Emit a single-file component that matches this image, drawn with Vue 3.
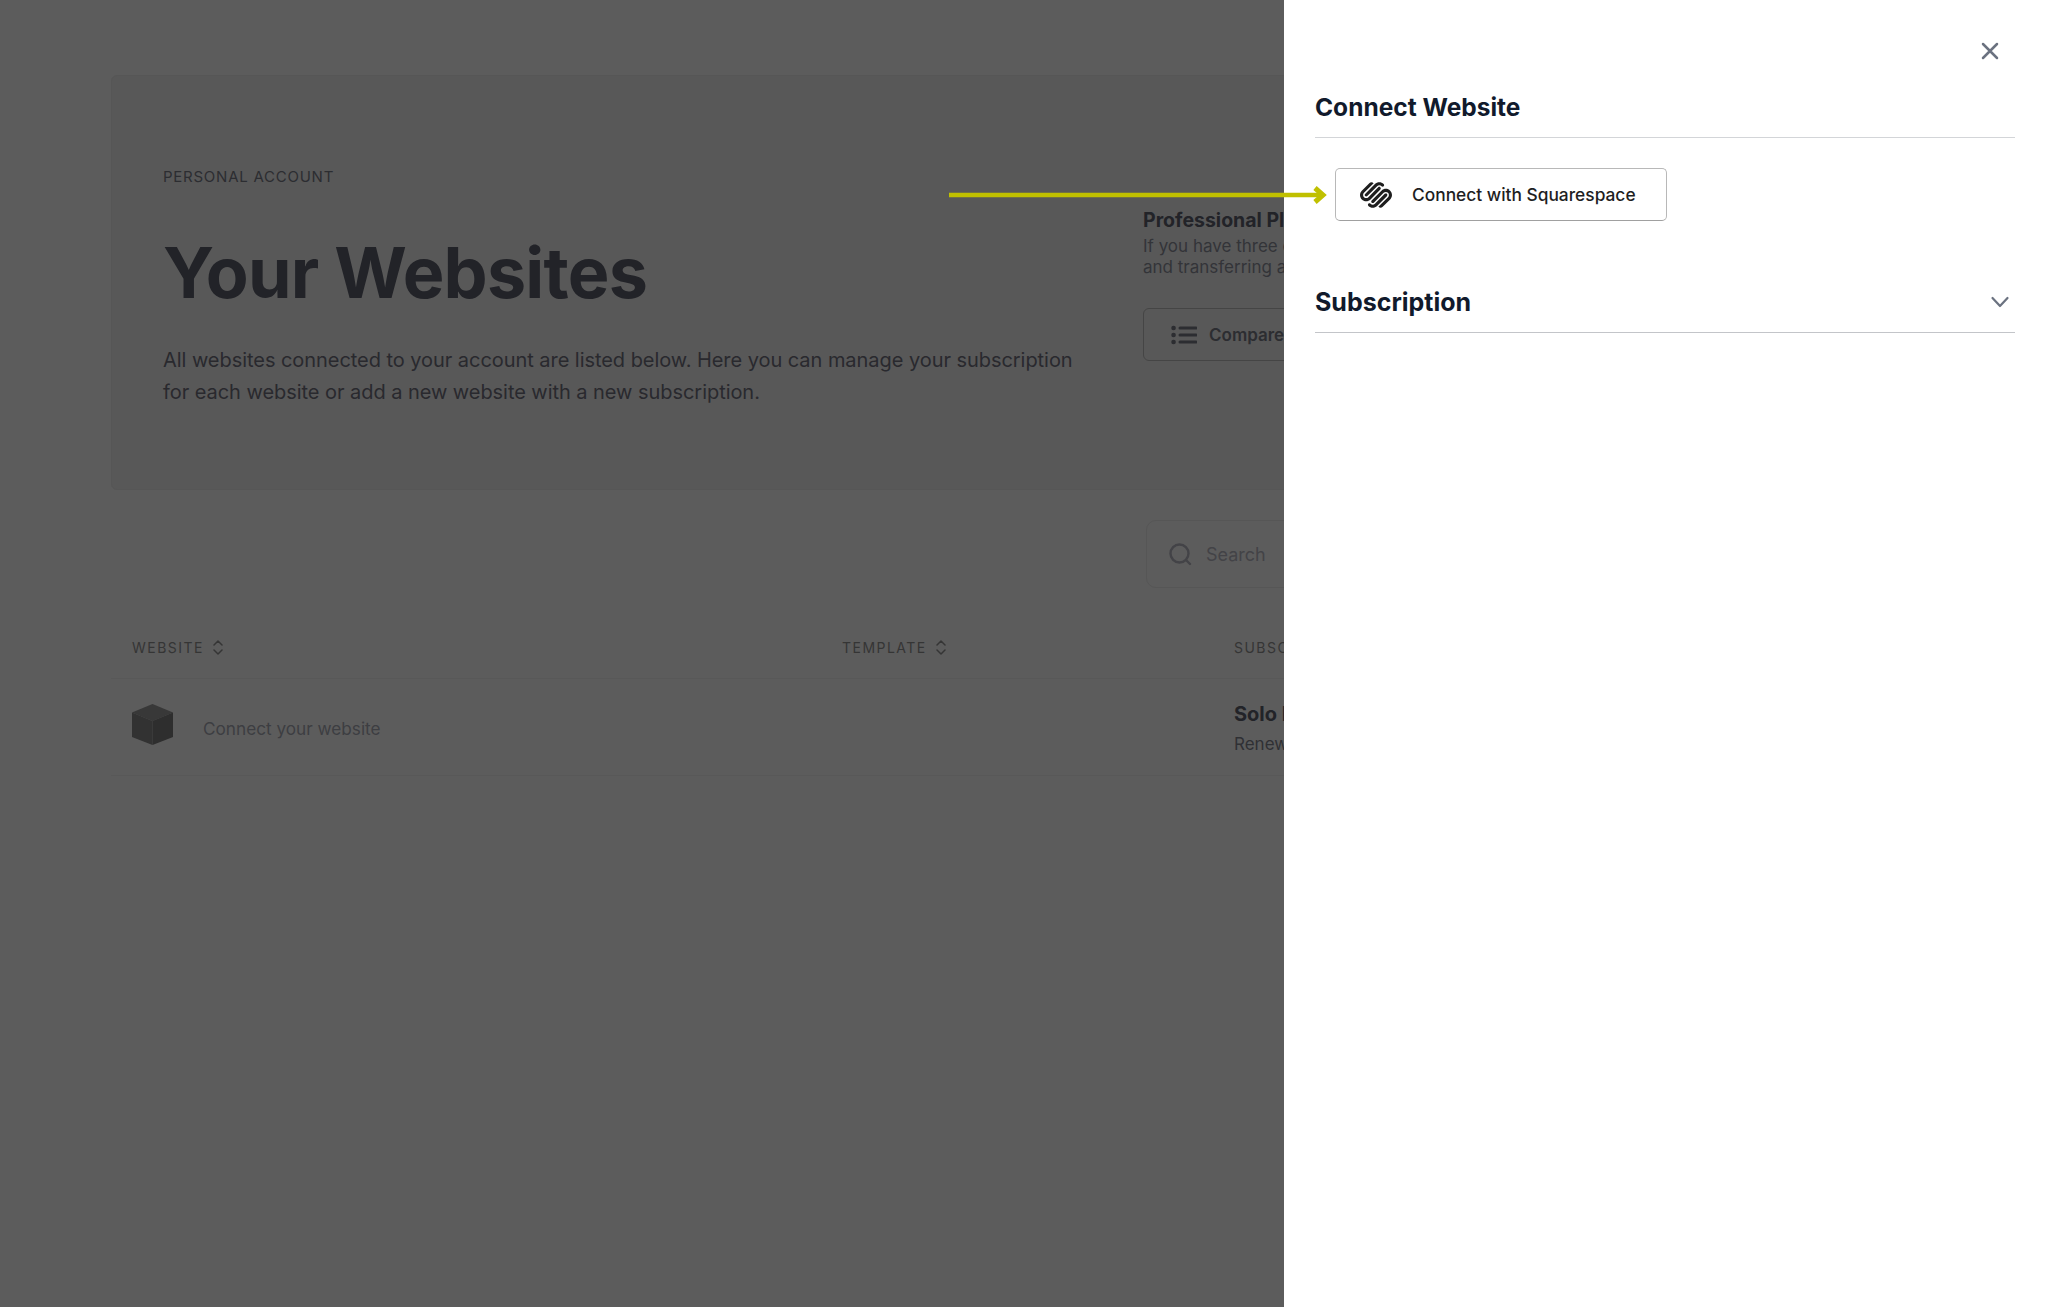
<template>
  <div class="screen">
    <!-- dimmed account page behind the drawer -->
    <main class="page">
      <section class="hero">
        <div class="hero__intro">
          <span class="hero__kicker">PERSONAL ACCOUNT</span>
          <h1 class="hero__title">Your Websites</h1>
          <p class="hero__text">
            All websites connected to your account are listed below. Here you can manage your subscription
            for each website or add a new website with a new subscription.
          </p>
        </div>
        <div class="plan">
          <h3 class="plan__title">Professional Plan</h3>
          <p class="plan__text">If you have three or more websites, consider upgrading<br />and transferring all of them to one plan.</p>
          <button class="plan__btn">
            <svg width="26" height="20" viewBox="0 0 26 20" fill="none" stroke="currentColor" stroke-width="3" stroke-linecap="round">
              <path d="M9 3h16M9 10h16M9 17h16" />
              <path d="M2.500 3h.1M2.500 10h.1M2.500 17h.1" stroke-width="4.500" />
            </svg>
            Compare Plans
          </button>
        </div>
      </section>

      <div class="toolbar">
        <div class="search">
          <svg width="24" height="24" viewBox="0 0 24 24" fill="none" stroke="currentColor" stroke-width="2.400" stroke-linecap="round">
            <circle cx="11.500" cy="11.500" r="9" />
            <path d="M18.500 18.500l3.500 3.500" />
          </svg>
          <span>Search</span>
        </div>
      </div>

      <div class="table">
        <div class="table__row table__row--head">
          <span v-for="col in columns" :key="col" class="table__head">
            {{ col }}
            <svg width="10" height="15" viewBox="0 0 10 15" fill="none" stroke="currentColor" stroke-width="1.500" stroke-linecap="round" stroke-linejoin="round">
              <path d="M1 5l4-4 4 4M1 10l4 4 4-4" />
            </svg>
          </span>
        </div>
        <div class="table__row table__row--body">
          <div class="site">
            <svg class="site__cube" width="41" height="41" viewBox="0 0 41 41">
              <path d="M20.500 0L41 8.500 20.500 17 0 8.500z" fill="#383838" />
              <path d="M0 8.500L20.500 17v24L0 33z" fill="#323232" />
              <path d="M41 8.500L20.500 17v24L41 33z" fill="#2e2e2e" />
            </svg>
            <span class="site__name">Connect your website</span>
          </div>
          <div></div>
          <div class="sub">
            <strong class="sub__name">Solo Plan</strong>
            <span class="sub__date">Renews on</span>
          </div>
        </div>
      </div>
    </main>

    <!-- highlight arrow over the page and drawer -->
    <svg class="arrow" width="378" height="20" viewBox="0 0 378 20" fill="none" stroke="#c0c000" stroke-width="4.500">
      <path d="M0 10h374" />
      <path d="M366 3l8 7-8 7" stroke-width="5" />
    </svg>

    <aside class="drawer">
      <button class="drawer__close" aria-label="Close">
        <svg width="20" height="20" viewBox="0 0 20 20" fill="none" stroke="#6b7280" stroke-width="2.500" stroke-linecap="round">
          <path d="M3 3l14 14M17 3L3 17" />
        </svg>
      </button>

      <div class="drawer__section">
        <h2 class="drawer__title">Connect Website</h2>
      </div>
      <div class="drawer__body">
        <button class="connect">
          <svg width="32" height="32" viewBox="0 0 24 24" fill="#1e1e1e">
            <path d="M22.655 8.719c-1.802-1.801-4.726-1.801-6.564 0l-7.351 7.35c-.45.45-.45 1.2 0 1.65.45.449 1.2.449 1.65 0l7.351-7.351c.899-.899 2.362-.899 3.264 0 .9.9.9 2.364 0 3.264l-7.239 7.239c.9.899 2.362.899 3.263 0l5.589-5.589c1.836-1.838 1.836-4.763.037-6.563zm-2.475 2.437c-.451-.45-1.201-.45-1.65 0l-7.354 7.389c-.9.899-2.361.899-3.262 0-.45-.45-1.2-.45-1.65 0s-.45 1.2 0 1.649c1.801 1.801 4.726 1.801 6.564 0l7.351-7.35c.449-.487.449-1.239.001-1.688zm-2.439-7.35c-1.801-1.801-4.726-1.801-6.564 0l-7.351 7.351c-.45.449-.45 1.199 0 1.649s1.2.45 1.65 0l7.395-7.351c.9-.899 2.371-.899 3.27 0 .451.45 1.201.45 1.65 0 .399-.45.399-1.2-.05-1.649zm-2.475 2.437c-.45-.45-1.2-.45-1.65 0l-7.351 7.389c-.899.9-2.363.9-3.265 0-.9-.9-.9-2.363 0-3.264l7.239-7.239c-.9-.9-2.362-.9-3.263 0L1.35 8.719c-1.8 1.8-1.8 4.725 0 6.563 1.801 1.801 4.725 1.801 6.564 0l7.35-7.351c.452-.45.452-1.2.002-1.649z" />
          </svg>
          <span>Connect with Squarespace</span>
        </button>
      </div>

      <div class="drawer__section drawer__section--sub">
        <h2 class="drawer__title drawer__title--lg">Subscription</h2>
        <svg width="20" height="12" viewBox="0 0 20 12" fill="none" stroke="#6b7280" stroke-width="2.200" stroke-linecap="round" stroke-linejoin="round">
          <path d="M2.500 2l7.500 8 7.500-8" />
        </svg>
      </div>
    </aside>
  </div>
</template>

<script setup>
const columns = ["WEBSITE", "TEMPLATE", "SUBSCRIPTION"]
</script>

<style>
html,
body {
  margin: 0;
  background: #5c5c5c;
}
</style>

<style scoped>
.screen {
  position: relative;
  height: 1307px;
  overflow: hidden;
  background: #5c5c5c;
  font-family: Inter, "Liberation Sans", sans-serif;
  color: #222328;
}

.page {
  padding: 75px 0 0 111px;
  width: 1936px;
  box-sizing: border-box;
}

.hero {
  display: flex;
  height: 415px;
  box-sizing: border-box;
  padding: 91px 51px 0;
  background: #585858;
  border: 1px solid #565656;
  border-radius: 6px;
}

.hero__intro {
  width: 980px;
}

.hero__kicker {
  display: block;
  font-size: 15px;
  line-height: 20px;
  letter-spacing: 0.05em;
  color: #2c2d31;
}

.hero__title {
  margin: 44px 0 0;
  font-size: 70px;
  line-height: 84px;
  font-weight: 700;
  letter-spacing: -0.011em;
}

.hero__text {
  margin: 29px 0 0;
  width: 930px;
  font-size: 20px;
  line-height: 32px;
  letter-spacing: -0.05px;
  color: #29292e;
}

.plan__title {
  margin: 41px 0 0;
  font-size: 19.500px;
  line-height: 24px;
  font-weight: 700;
}

.plan__text {
  margin: 4px 0 0;
  width: 520px;
  font-size: 17px;
  line-height: 21px;
  color: #333438;
}

.plan__btn {
  display: flex;
  align-items: center;
  gap: 12px;
  width: 300px;
  height: 53px;
  margin-top: 30px;
  padding: 0 28px 0 27px;
  background: none;
  border: 1px solid #454545;
  border-radius: 6px;
  font: 600 17px Inter, sans-serif;
  color: #2c2d31;
}

.toolbar {
  display: flex;
  padding: 30px 0 0 1035px;
}

.search {
  display: flex;
  align-items: center;
  gap: 14px;
  width: 400px;
  height: 68px;
  box-sizing: border-box;
  padding-left: 21px;
  border: 1px solid #565656;
  border-radius: 10px;
  font-size: 18px;
  color: #434347;
}

.table__row {
  display: grid;
  grid-template-columns: 710px 392px 1fr;
  padding-left: 21px;
  border-bottom: 1px solid #585858;
}

.table__row--head {
  height: 91px;
  align-items: center;
  padding-top: 28px;
  box-sizing: border-box;
}

.table__head {
  display: inline-flex;
  align-items: center;
  gap: 9px;
  font-size: 14px;
  letter-spacing: 0.105em;
  color: #353535;
}

.table__row--body {
  height: 96px;
  align-items: center;
}

.site {
  display: flex;
  align-items: center;
  gap: 30px;
}

.site__cube {
  margin-top: -6px;
}

.site__name {
  margin-top: 3px;
  font-size: 17.200px;
  color: #3d3e42;
}

.sub {
  display: flex;
  flex-direction: column;
  gap: 8px;
  margin-top: 4px;
}

.sub__name {
  font-size: 20px;
  line-height: 22px;
}

.sub__date {
  font-size: 17px;
  line-height: 22px;
  color: #2f3034;
}

.arrow {
  position: absolute;
  left: 949px;
  top: 185px;
  z-index: 2;
}

.drawer {
  position: absolute;
  top: 0;
  right: 0;
  bottom: 0;
  z-index: 1;
  width: 764px;
  box-sizing: border-box;
  padding: 46px 33px 0 31px;
  background: #fff;
  color: #111a2c;
}

.drawer__close {
  position: absolute;
  top: 41px;
  right: 48px;
  display: flex;
  padding: 0;
  background: none;
  border: 0;
}

.drawer__section {
  display: flex;
  align-items: center;
  justify-content: space-between;
  height: 92px;
  box-sizing: border-box;
  padding-top: 31px;
  border-bottom: 1px solid #d3d5d8;
}

.drawer__section--sub {
  height: 76px;
  padding: 17px 5px 2px 0;
  border-bottom-color: #c3c5c9;
}

.drawer__title {
  margin: 0;
  font-size: 24.500px;
  line-height: 32px;
  font-weight: 700;
}

.drawer__title--lg {
  font-size: 25px;
}

.drawer__body {
  height: 119px;
  padding: 30px 0 0 20px;
  box-sizing: border-box;
}

.connect {
  display: flex;
  align-items: center;
  gap: 20px;
  width: 332px;
  height: 53px;
  padding: 0 0 0 24px;
  box-sizing: border-box;
  background: #fff;
  border: 1px solid #b8b8b8;
  border-bottom-color: #a0a0a0;
  border-radius: 5px;
  font: 500 17.350px Inter, sans-serif;
  color: #1e1e22;
}
</style>
